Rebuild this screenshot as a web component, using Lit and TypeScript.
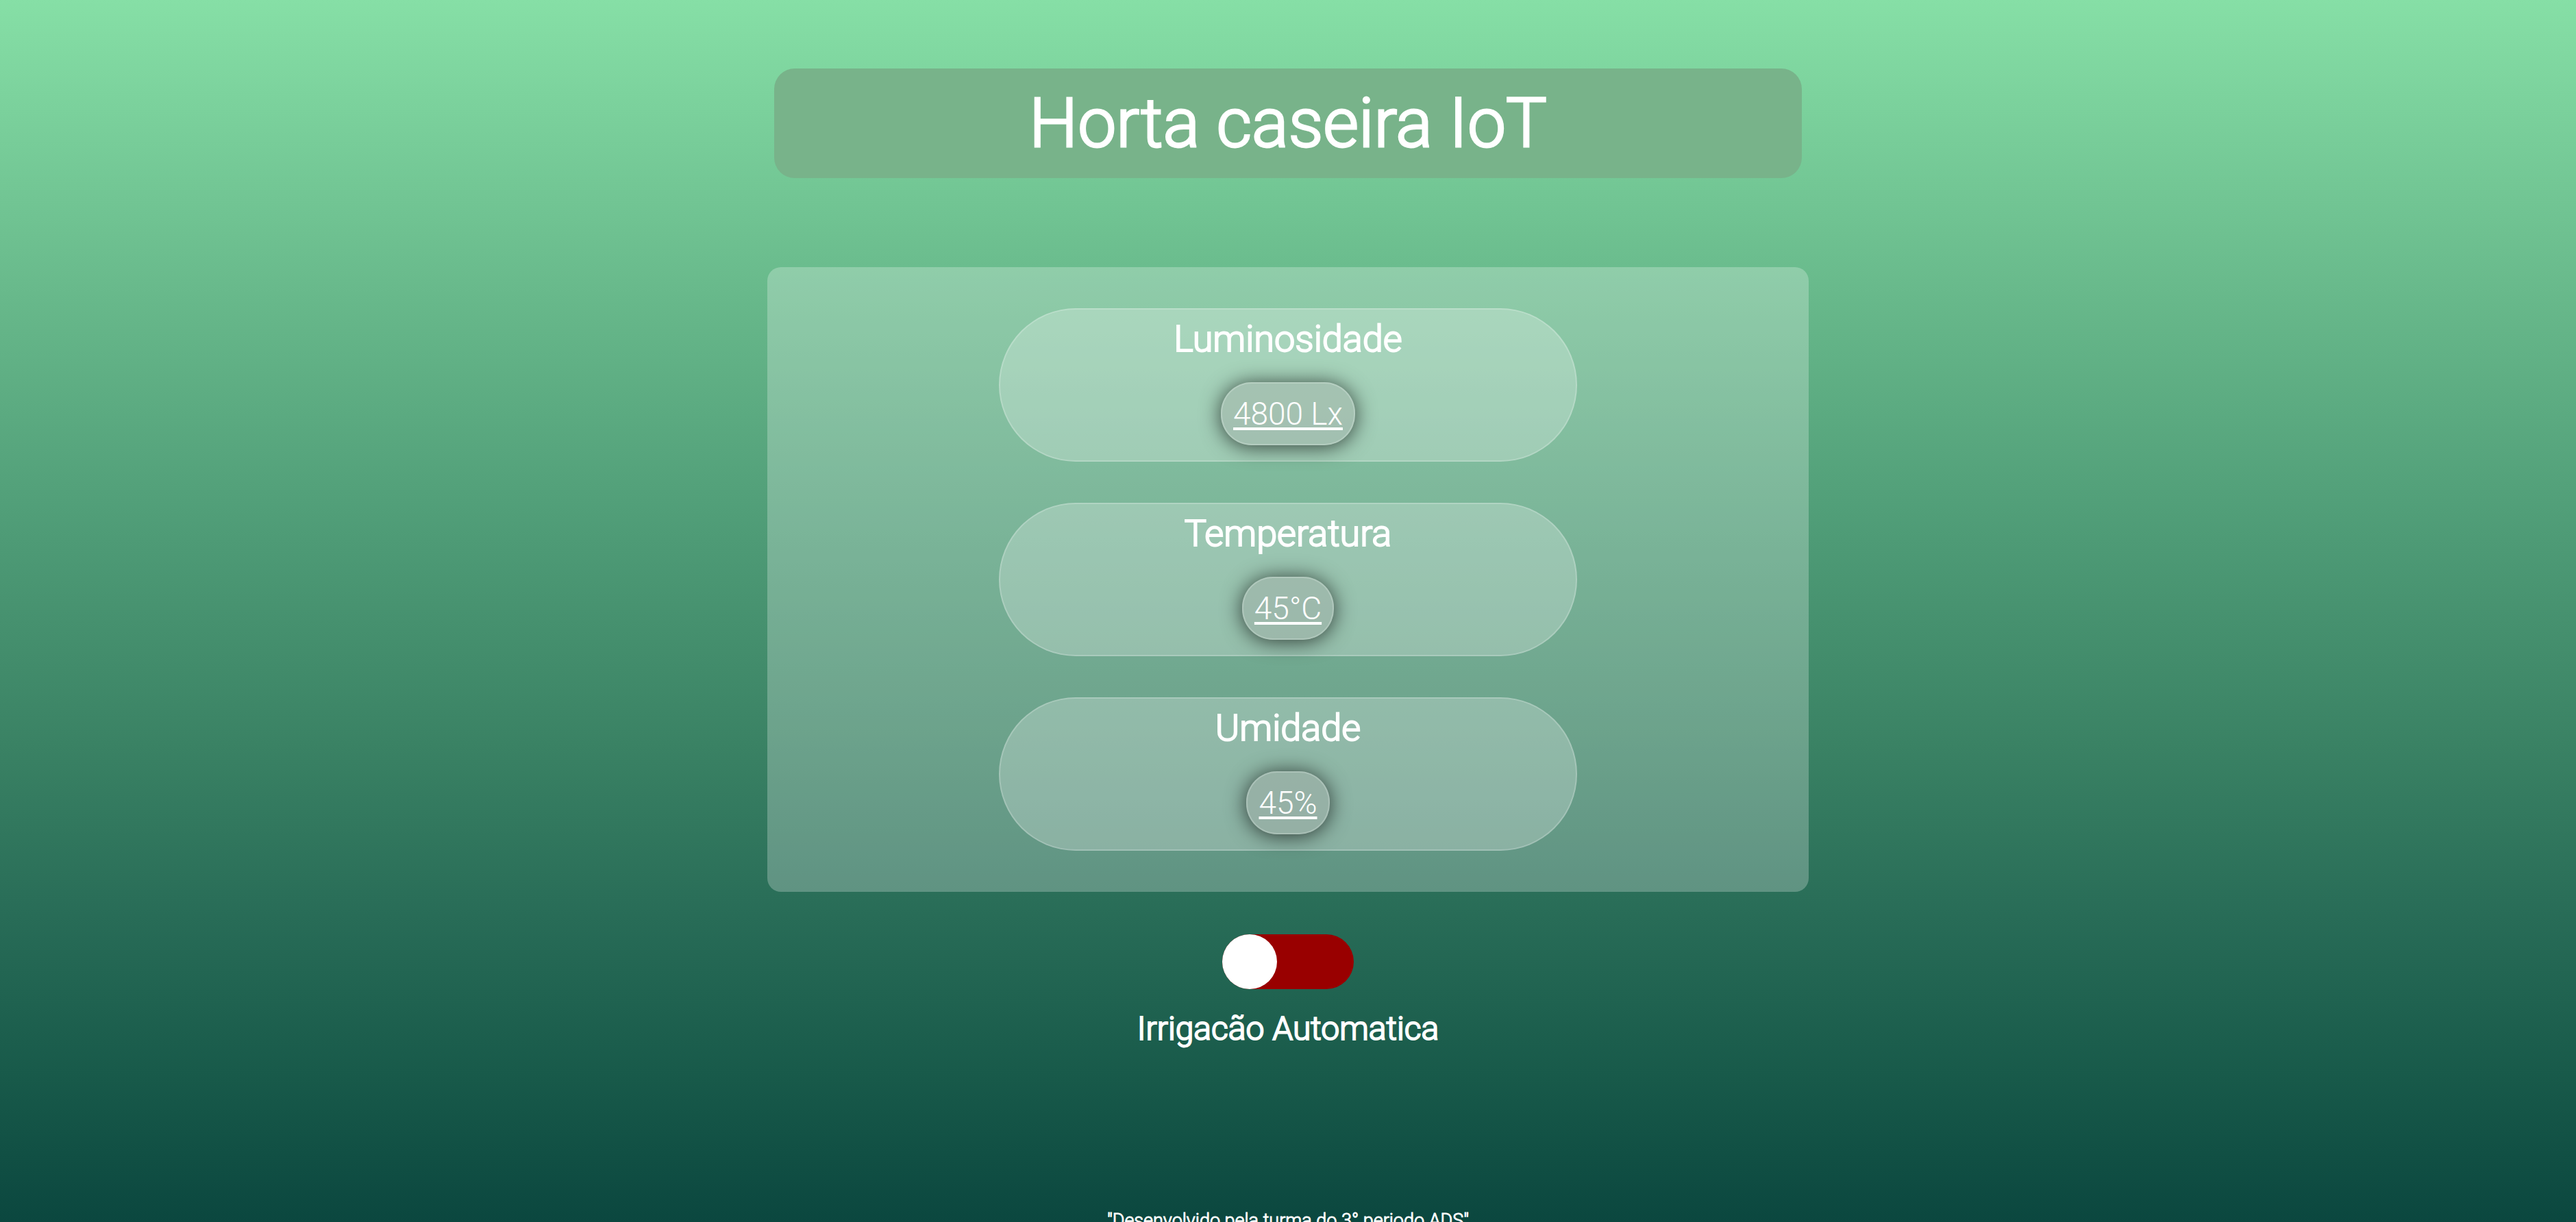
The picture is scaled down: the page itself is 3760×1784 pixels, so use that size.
import { LitElement, html, css } from "lit";
import { customElement, state } from "lit/decorators.js";

interface Reading {
  label: string;
  value: string;
}

@customElement("sensor-card")
class SensorCard extends LitElement {
  static properties = { label: { type: String }, value: { type: String } };
  declare label: string;
  declare value: string;

  static styles = css`
    :host {
      display: block;
    }
    .card {
      box-sizing: border-box;
      display: flex;
      flex-direction: column;
      align-items: center;
      gap: 30px;
      padding: 10px 20px 22px;
      border: 2px solid rgba(255, 255, 255, 0.2);
      border-radius: 112px;
      background: rgba(255, 255, 255, 0.25);
    }
    .label {
      margin: 0;
      font-size: 54px;
      font-weight: 300;
      line-height: 66px;
      -webkit-text-stroke: 2px currentColor;
    }
    .value {
      padding: 16px;
      border: 2px solid rgba(255, 255, 255, 0.2);
      border-radius: 45px;
      background: rgba(164, 172, 168, 0.4);
      box-shadow: 0 2px 30px rgba(0, 0, 0, 0.7);
      font-size: 46px;
      font-weight: 300;
      line-height: 56px;
      text-decoration: underline;
      text-decoration-thickness: 4px;
      text-underline-offset: 4px;
    }
  `;

  render() {
    return html`
      <article class="card">
        <h2 class="label">${this.label}</h2>
        <output class="value">${this.value}</output>
      </article>
    `;
  }
}

@customElement("app-root")
class AppRoot extends LitElement {
  @state() private automatic = false;

  private readings: Reading[] = [
    { label: "Luminosidade", value: "4800 Lx" },
    { label: "Temperatura", value: "45°C" },
    { label: "Umidade", value: "45%" },
  ];

  static styles = css`
    :host {
      display: block;
      height: 100vh;
      overflow: hidden;
      background: linear-gradient(
        180deg,
        #86dfa6 0%,
        #68b98b 24%,
        #4e9b76 44%,
        #3a8264 61%,
        #286c57 75%,
        #185a4a 88%,
        #0b473f 100%
      );
      color: #fff;
      font-family: Roboto, "Liberation Sans", sans-serif;
    }
    .page {
      display: flex;
      flex-direction: column;
      align-items: center;
      padding-top: 100px;
    }
    .title {
      box-sizing: border-box;
      width: 100%;
      max-width: 1500px;
      margin: 0 0 130px;
      border-radius: 30px;
      background: #78b38a;
      font-size: 100px;
      font-weight: 300;
      line-height: 160px;
      text-align: center;
      -webkit-text-stroke: 3px currentColor;
    }
    .panel {
      box-sizing: border-box;
      display: grid;
      grid-template-columns: minmax(0, 844px);
      justify-content: center;
      gap: 60px;
      width: 100%;
      max-width: 1520px;
      padding: 60px 20px;
      border-radius: 20px;
      background: rgba(255, 255, 255, 0.25);
    }
    .irrigation {
      display: flex;
      flex-direction: column;
      align-items: center;
      gap: 28px;
      margin-top: 62px;
      font-size: 48px;
      font-weight: 300;
      line-height: 60px;
      -webkit-text-stroke: 2px currentColor;
    }
    .switch {
      appearance: none;
      display: flex;
      width: 192px;
      height: 80px;
      margin: 0;
      border-radius: 40px;
      background: #990000;
      cursor: pointer;
    }
    .switch::before {
      content: "";
      width: 80px;
      height: 80px;
      border-radius: 50%;
      background: #fff;
    }
    .switch:checked {
      justify-content: flex-end;
      background: #1f9d4c;
    }
    .footer {
      margin-top: 234px;
      font-size: 27px;
      font-weight: 300;
      line-height: 32px;
      -webkit-text-stroke: 1px currentColor;
    }
  `;

  private toggle(event: Event) {
    this.automatic = (event.target as HTMLInputElement).checked;
  }

  render() {
    return html`
      <div class="page">
        <h1 class="title">Horta caseira IoT</h1>
        <main class="panel">
          ${this.readings.map((r) => html`<sensor-card .label=${r.label} .value=${r.value}></sensor-card>`)}
        </main>
        <label class="irrigation">
          <input class="switch" type="checkbox" role="switch" .checked=${this.automatic} @change=${this.toggle} />
          <span>Irrigacão Automatica</span>
        </label>
        <footer class="footer">"Desenvolvido pela turma do 3° periodo ADS"</footer>
      </div>
    `;
  }
}
